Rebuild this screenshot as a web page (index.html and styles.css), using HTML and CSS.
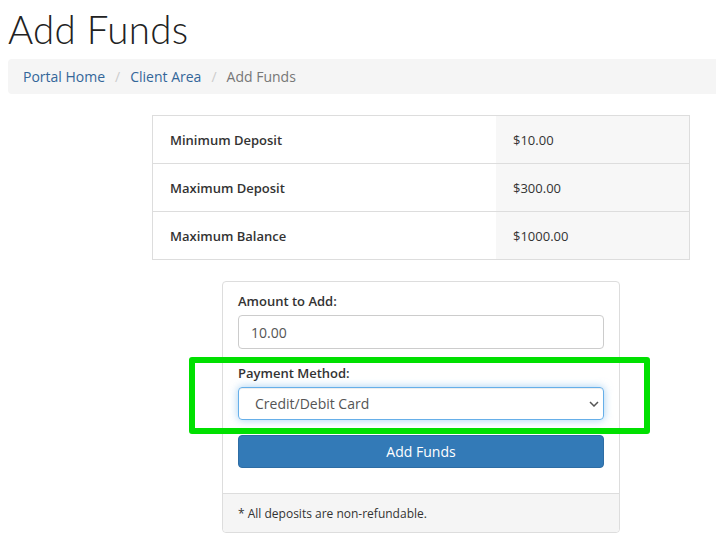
FILE: index.html
```html
<!DOCTYPE html>
<html>
<head>
<meta charset="utf-8">
<link rel="stylesheet" href="styles.css">
</head>
<body>
<h1 class="title">Add Funds</h1>
<ol class="breadcrumb">
  <li><a href="#">Portal Home</a></li>
  <li class="sep">/</li>
  <li><a href="#">Client Area</a></li>
  <li class="sep">/</li>
  <li class="active">Add Funds</li>
</ol>
<div class="content">
  <table class="limits">
    <tr><td class="lbl">Minimum Deposit</td><td class="val">$10.00</td></tr>
    <tr><td class="lbl">Maximum Deposit</td><td class="val">$300.00</td></tr>
    <tr><td class="lbl">Maximum Balance</td><td class="val">$1000.00</td></tr>
  </table>
  <div class="card">
    <div class="card-body">
      <div class="group">
        <label class="label">Amount to Add:</label>
        <div class="input">10.00</div>
      </div>
      <div class="group pm">
        <label class="label">Payment Method:</label>
        <div class="select">
          <span>Credit/Debit Card</span>
          <svg width="10" height="6" viewBox="0 0 10 6"><path d="M1 1l4 4 4-4" fill="none" stroke="#555" stroke-width="1.5"/></svg>
        </div>
        <div class="highlight"></div>
      </div>
      <button class="btn">Add Funds</button>
    </div>
    <div class="card-footer">* All deposits are non-refundable.</div>
  </div>
</div>
</body>
</html>
```
FILE: styles.css
```css
html, body { margin: 0; padding: 0; background: #fff; }
body {
  font-family: "Open Sans", "Liberation Sans", sans-serif;
  color: #333;
  padding-left: 8px;
  overflow: hidden;
}
.title {
  font-family: "Lato", "Open Sans", sans-serif;
  font-weight: 300;
  font-size: 38.5px;
  line-height: 42px;
  margin: 8px 0 9px 0;
  color: #222;
  letter-spacing: 0.3px;
}
.breadcrumb {
  list-style: none;
  margin: 0;
  padding: 0 15px;
  height: 35px;
  background: #f5f5f5;
  border-radius: 4px 0 0 4px;
  display: flex;
  align-items: center;
  font-size: 14px;
  width: 678px;
}
.breadcrumb a { color: #336699; text-decoration: none; }
.breadcrumb .sep { color: #ccc; padding: 0 10px; }
.breadcrumb .active { color: #777; }
.content {
  padding: 21px 0 0 144px;
  display: flex;
  flex-direction: column;
}
.limits {
  border-collapse: collapse;
  width: 538px;
  font-size: 13px;
  border: 1px solid #ddd;
}
.limits td {
  height: 47px;
  padding: 0 17px;
  border-top: 1px solid #ddd;
}
.limits .lbl { font-weight: 600; width: 309px; color: #333; }
.limits .val { background: #f7f7f7; color: #333; }
.card {
  margin: 21px 0 0 70px;
  width: 396px;
  border: 1px solid #ddd;
  border-radius: 4px;
}
.card-body {
  padding: 10px 15px 25px 15px;
}
.group { margin-bottom: 15px; position: relative; }
.label {
  display: block;
  font-size: 13px;
  font-weight: 600;
  margin-bottom: 5px;
  line-height: 18px;
}
.input, .select {
  box-sizing: border-box;
  height: 34px;
  border: 1px solid #ccc;
  border-radius: 4px;
  font-size: 14px;
  display: flex;
  align-items: center;
  padding: 0 12px;
  color: #555;
}
.select {
  border-color: #66afe9;
  box-shadow: inset 0 1px 1px rgba(0,0,0,.075), 0 0 8px rgba(102,175,233,.6);
  padding-left: 16px;
  padding-right: 4px;
  justify-content: space-between;
  height: 33px;
}
.highlight {
  position: absolute;
  left: -49px;
  top: -7px;
  width: 449px;
  height: 65px;
  border: 6px solid #00e000;
  border-radius: 3px;
  pointer-events: none;
}
.btn {
  display: block;
  width: 100%;
  height: 33px;
  border: 1px solid #2e6da4;
  border-radius: 4px;
  background: #337ab7;
  color: #fff;
  font-family: "Open Sans", sans-serif;
  font-size: 14px;
}
.card-footer {
  background: #f5f5f5;
  border-top: 1px solid #ddd;
  padding: 0 15px;
  height: 38px;
  display: flex;
  align-items: center;
  font-size: 12px;
  border-radius: 0 0 4px 4px;
}
```
